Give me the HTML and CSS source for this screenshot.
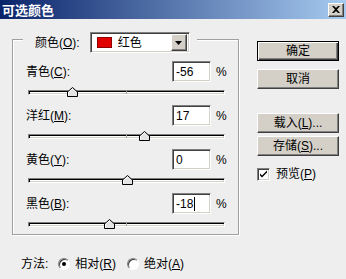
FILE: index.html
```html
<!DOCTYPE html>
<html lang="zh">
<head>
<meta charset="utf-8">
<link rel="stylesheet" href="styles.css">
</head>
<body>
<div class="titlebar">
  <span class="title">可选颜色</span>
  <span class="close"><svg width="8" height="7" viewBox="0 0 8 7"><path d="M0 0h2l2 2 2-2h2L5 3.5 8 7H6L4 5 2 7H0l3-3.5z" fill="#000"/></svg></span>
</div>
<div class="main">
  <div class="left">
    <div class="group">
      <div class="group-head">
        <span class="head-label">颜色(<u>O</u>):</span>
        <div class="select">
          <span class="swatch"></span>
          <span class="select-text">红色</span>
          <span class="select-btn"><svg width="7" height="4" viewBox="0 0 7 4"><path d="M0 0h7L3.5 4z" fill="#000"/></svg></span>
        </div>
      </div>
      <div class="section">
        <div class="row"><span class="lbl">青色(<u>C</u>):</span><span class="num">-56</span><span class="pct">%</span></div>
        <div class="slider"><span class="tick"></span><svg class="thumb" style="left:38px" width="11" height="10" viewBox="0 0 11 10"><path d="M5.5 0.5L10.5 5V9.5H0.5V5z" fill="#e4e4e4" stroke="#000"/><path d="M1.5 5.4V8.5M1.5 5.4L5.5 1.8" stroke="#fff" fill="none"/></svg></div>
      </div>
      <div class="section">
        <div class="row"><span class="lbl">洋红(<u>M</u>):</span><span class="num">17</span><span class="pct">%</span></div>
        <div class="slider"><span class="tick"></span><svg class="thumb" style="left:110px" width="11" height="10" viewBox="0 0 11 10"><path d="M5.5 0.5L10.5 5V9.5H0.5V5z" fill="#e4e4e4" stroke="#000"/><path d="M1.5 5.4V8.5M1.5 5.4L5.5 1.8" stroke="#fff" fill="none"/></svg></div>
      </div>
      <div class="section">
        <div class="row"><span class="lbl">黄色(<u>Y</u>):</span><span class="num">0</span><span class="pct">%</span></div>
        <div class="slider"><span class="tick"></span><svg class="thumb" style="left:93px" width="11" height="10" viewBox="0 0 11 10"><path d="M5.5 0.5L10.5 5V9.5H0.5V5z" fill="#e4e4e4" stroke="#000"/><path d="M1.5 5.4V8.5M1.5 5.4L5.5 1.8" stroke="#fff" fill="none"/></svg></div>
      </div>
      <div class="section">
        <div class="row"><span class="lbl">黑色(<u>B</u>):</span><span class="num">-18<span class="caret"></span></span><span class="pct">%</span></div>
        <div class="slider"><span class="tick"></span><svg class="thumb" style="left:75px" width="11" height="10" viewBox="0 0 11 10"><path d="M5.5 0.5L10.5 5V9.5H0.5V5z" fill="#e4e4e4" stroke="#000"/><path d="M1.5 5.4V8.5M1.5 5.4L5.5 1.8" stroke="#fff" fill="none"/></svg></div>
      </div>
    </div>
    <div class="method">
      <span class="method-label">方法:</span>
      <span class="radio on"></span><span class="radio-text">相对(<u>R</u>)</span>
      <span class="radio"></span><span class="radio-text">绝对(<u>A</u>)</span>
    </div>
  </div>
  <div class="right">
    <div class="btn default">确定</div>
    <div class="btn b-cancel">取消</div>
    <div class="btn b-load">载入(<u>L</u>)...</div>
    <div class="btn b-save">存储(<u>S</u>)...</div>
    <div class="check-row">
      <span class="checkbox"><svg width="9" height="9" viewBox="0 0 9 9"><path d="M1 3.5l2 2 5-5v2l-5 5-2-2z" fill="#000"/></svg></span>
      <span class="check-text">预览(<u>P</u>)</span>
    </div>
  </div>
</div>
</body>
</html>
```
FILE: styles.css
```css
* { box-sizing: border-box; }
html, body { margin: 0; padding: 0; }
body {
  width: 346px;
  height: 279px;
  overflow: hidden;
  background: #eeeeee;
  color: #000;
  font: 12px/1 "Liberation Sans", "Noto Sans CJK SC", sans-serif;
}
u { text-decoration: underline; text-underline-offset: 1px; }

.titlebar {
  height: 19px;
  background: linear-gradient(to right, #0a246a, #a6caf0);
  display: flex;
  align-items: center;
  justify-content: space-between;
  padding: 0 2px 0 2px;
}
.title {
  color: #fff;
  font-weight: bold;
  font-size: 13px;
  font-family: "Noto Sans CJK SC", sans-serif;
  line-height: 19px;
}
.close {
  width: 16px;
  height: 14px;
  background: #d4d0c8;
  border: 1px solid;
  border-color: #fff #404040 #404040 #fff;
  box-shadow: inset -1px -1px 0 #808080;
  display: flex;
  align-items: center;
  justify-content: center;
}

.main { display: flex; }
.left { width: 240px; padding-left: 12px; }

.group {
  margin-top: 20px;
  width: 227px;
  border: 1px solid #a0a0a0;
  box-shadow: inset 1px 1px 0 #fff, 1px 1px 0 #fff;
  padding: 0 0 7px 0;
}
.group-head {
  display: flex;
  align-items: center;
  margin: -8px 0 0 10px;
  padding: 0 7px 0 12px;
  background: #eeeeee;
  width: max-content;
  height: 21px;
}
.head-label { margin-right: 10px; }
.select {
  width: 100px;
  height: 21px;
  background: #fff;
  border: 1px solid;
  border-color: #808080 #fff #fff #808080;
  box-shadow: inset 1px 1px 0 #404040, inset -1px -1px 0 #d4d0c8;
  display: flex;
  align-items: center;
  padding: 2px 2px 2px 6px;
}
.swatch {
  width: 15px;
  height: 11px;
  background: #e00000;
  border: 1px solid #900000;
}
.select-text { margin-left: 6px; }
.select-btn {
  margin-left: auto;
  width: 16px;
  height: 17px;
  background: #d4d0c8;
  border: 1px solid;
  border-color: #fff #404040 #404040 #fff;
  box-shadow: inset -1px -1px 0 #808080;
  display: flex;
  align-items: center;
  justify-content: center;
}

.section { margin-top: 10px; }
.group-head + .section { margin-top: 8px; }
.row {
  display: flex;
  align-items: center;
  height: 21px;
  padding-left: 13px;
}
.lbl { width: 146px; }
.num {
  width: 39px;
  height: 21px;
  background: #fff;
  border: 1px solid;
  border-color: #808080 #fff #fff #808080;
  box-shadow: inset 1px 1px 0 #404040, inset -1px -1px 0 #d4d0c8;
  padding-left: 3px;
  display: flex;
  align-items: center;
  font-size: 12px;
}
.caret {
  width: 1px;
  height: 14px;
  background: #000;
  margin-left: 1px;
}
.pct { margin-left: 5px; }

.slider {
  position: relative;
  margin: 8px 0 0 15px;
  width: 197px;
  height: 5px;
  background: #fff;
  border: 1px solid;
  border-color: #808080 #fff #fff #808080;
  box-shadow: inset 1px 1px 0 #000, inset -1px -1px 0 #d4d0c8;
}
.tick {
  position: absolute;
  left: 97px;
  top: 0;
  width: 1px;
  height: 3px;
  background: #a0a0a0;
}
.thumb {
  position: absolute;
  top: -4px;
  display: block;
}

.method {
  display: flex;
  align-items: center;
  height: 16px;
  margin-top: 21px;
  padding-left: 9px;
}
.method-label { margin-right: 10px; }
.radio {
  position: relative;
  width: 12px;
  height: 12px;
  border-radius: 50%;
  background: #fff;
  border: 1px solid;
  border-color: #808080 #fff #fff #808080;
  box-shadow: inset 1px 1px 0 #404040;
}
.radio.on::after {
  content: "";
  position: absolute;
  left: 3px;
  top: 3px;
  width: 4px;
  height: 4px;
  border-radius: 50%;
  background: #000;
}
.radio-text { margin-left: 5px; margin-right: 11px; }

.right {
  display: flex;
  flex-direction: column;
  padding-top: 22px;
  margin-left: 17px;
}
.btn {
  width: 82px;
  height: 20px;
  background: #d4d0c8;
  border: 1px solid;
  border-color: #fff #404040 #404040 #fff;
  box-shadow: inset -1px -1px 0 #808080;
  display: flex;
  align-items: center;
  justify-content: center;
}
.btn.default {
  border: 1px solid #000;
  box-shadow: inset 1px 1px 0 #fff, inset -1px -1px 0 #404040, inset -2px -2px 0 #808080;
}
.b-cancel { margin-top: 8px; }
.b-load { margin-top: 24px; }
.b-save { margin-top: 3px; }
.check-row {
  display: flex;
  align-items: center;
  margin-top: 11px;
  height: 14px;
}
.checkbox {
  width: 13px;
  height: 13px;
  background: #fff;
  border: 1px solid;
  border-color: #808080 #fff #fff #808080;
  box-shadow: inset 1px 1px 0 #404040, inset -1px -1px 0 #d4d0c8;
  display: flex;
  align-items: center;
  justify-content: center;
}
.check-text { margin-left: 6px; }
```
